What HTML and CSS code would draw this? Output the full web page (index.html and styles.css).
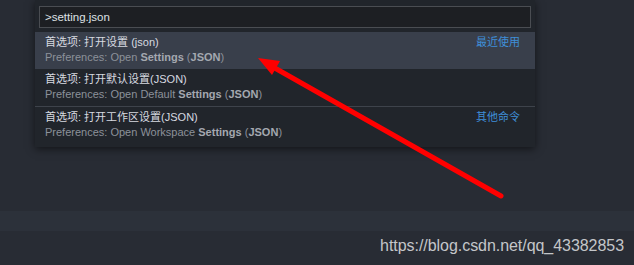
FILE: index.html
```html
<!DOCTYPE html>
<html lang="zh">
<head>
<meta charset="utf-8">
<link rel="stylesheet" href="styles.css">
</head>
<body>
<div class="page">
  <div class="editor">
    <div class="palette">
      <div class="input">&gt;setting.json</div>
      <div class="list">
        <div class="row active">
          <div class="texts">
            <div class="title">首选项: 打开设置 (json)</div>
            <div class="sub">Preferences: Open <b>Settings</b> (<b>JSON</b>)</div>
          </div>
          <div class="tag">最近使用</div>
        </div>
        <div class="row">
          <div class="texts">
            <div class="title">首选项: 打开默认设置(JSON)</div>
            <div class="sub">Preferences: Open Default <b>Settings</b> (<b>JSON</b>)</div>
          </div>
        </div>
        <div class="row sep">
          <div class="texts">
            <div class="title">首选项: 打开工作区设置(JSON)</div>
            <div class="sub">Preferences: Open Workspace <b>Settings</b> (<b>JSON</b>)</div>
          </div>
          <div class="tag">其他命令</div>
        </div>
      </div>
    </div>
  </div>
  <div class="band"></div>
  <div class="footer"><span class="mark">https://blog.csdn.net/qq_43382853</span></div>
  <svg class="arrow" width="634" height="265" viewBox="0 0 634 265">
    <line x1="273" y1="67" x2="501" y2="196" stroke="#ff0000" stroke-width="5" stroke-linecap="round"/>
    <polygon points="258,58 280,61 272,75" fill="#ff0000"/>
  </svg>
</div>
</body>
</html>
```
FILE: styles.css
```css
html, body {
  margin: 0;
  padding: 0;
  background: #282c34;
}
.page {
  position: relative;
  width: 634px;
  height: 265px;
  overflow: hidden;
  font-family: "Liberation Sans", "Noto Sans CJK SC", sans-serif;
}
.editor {
  height: 211px;
  background: #282c34;
}
.palette {
  margin-left: 35px;
  width: 500px;
  background: #21252b;
  padding: 6px 0 4px;
  box-shadow: 0 2px 8px rgba(0,0,0,0.55);
  box-sizing: border-box;
}
.input {
  margin: 0 4px;
  height: 22px;
  box-sizing: border-box;
  border: 1px solid #4a4d52;
  background: #1d1f23;
  color: #dfe1e5;
  font-size: 11.5px;
  line-height: 20px;
  padding-left: 5px;
}
.list {
  margin-top: 4px;
}
.row {
  height: 37px;
  display: flex;
  justify-content: space-between;
  padding: 3px 15px 0 10px;
  box-sizing: border-box;
}
.row.active {
  background: #393f4b;
}
.row.sep {
  border-top: 1px solid #3e434b;
  height: 37px;
}
.title {
  color: #d7dae0;
  font-size: 11px;
  line-height: 15px;
}
.sub {
  color: #8c919a;
  font-size: 11px;
  line-height: 15px;
}
.sub b {
  color: #a4a8b0;
  font-weight: bold;
}
.tag {
  color: #3f8fd9;
  font-size: 11px;
  line-height: 15px;
}
.band {
  height: 20px;
  background: #2c313a;
}
.footer {
  height: 34px;
  display: flex;
  justify-content: flex-end;
  padding-right: 10px;
}
.mark {
  color: #c4c6c9;
  font-size: 16px;
  line-height: 17px;
  margin-top: 6px;
  letter-spacing: -0.05px;
}
.arrow {
  position: absolute;
  top: 0;
  left: 0;
}
```
